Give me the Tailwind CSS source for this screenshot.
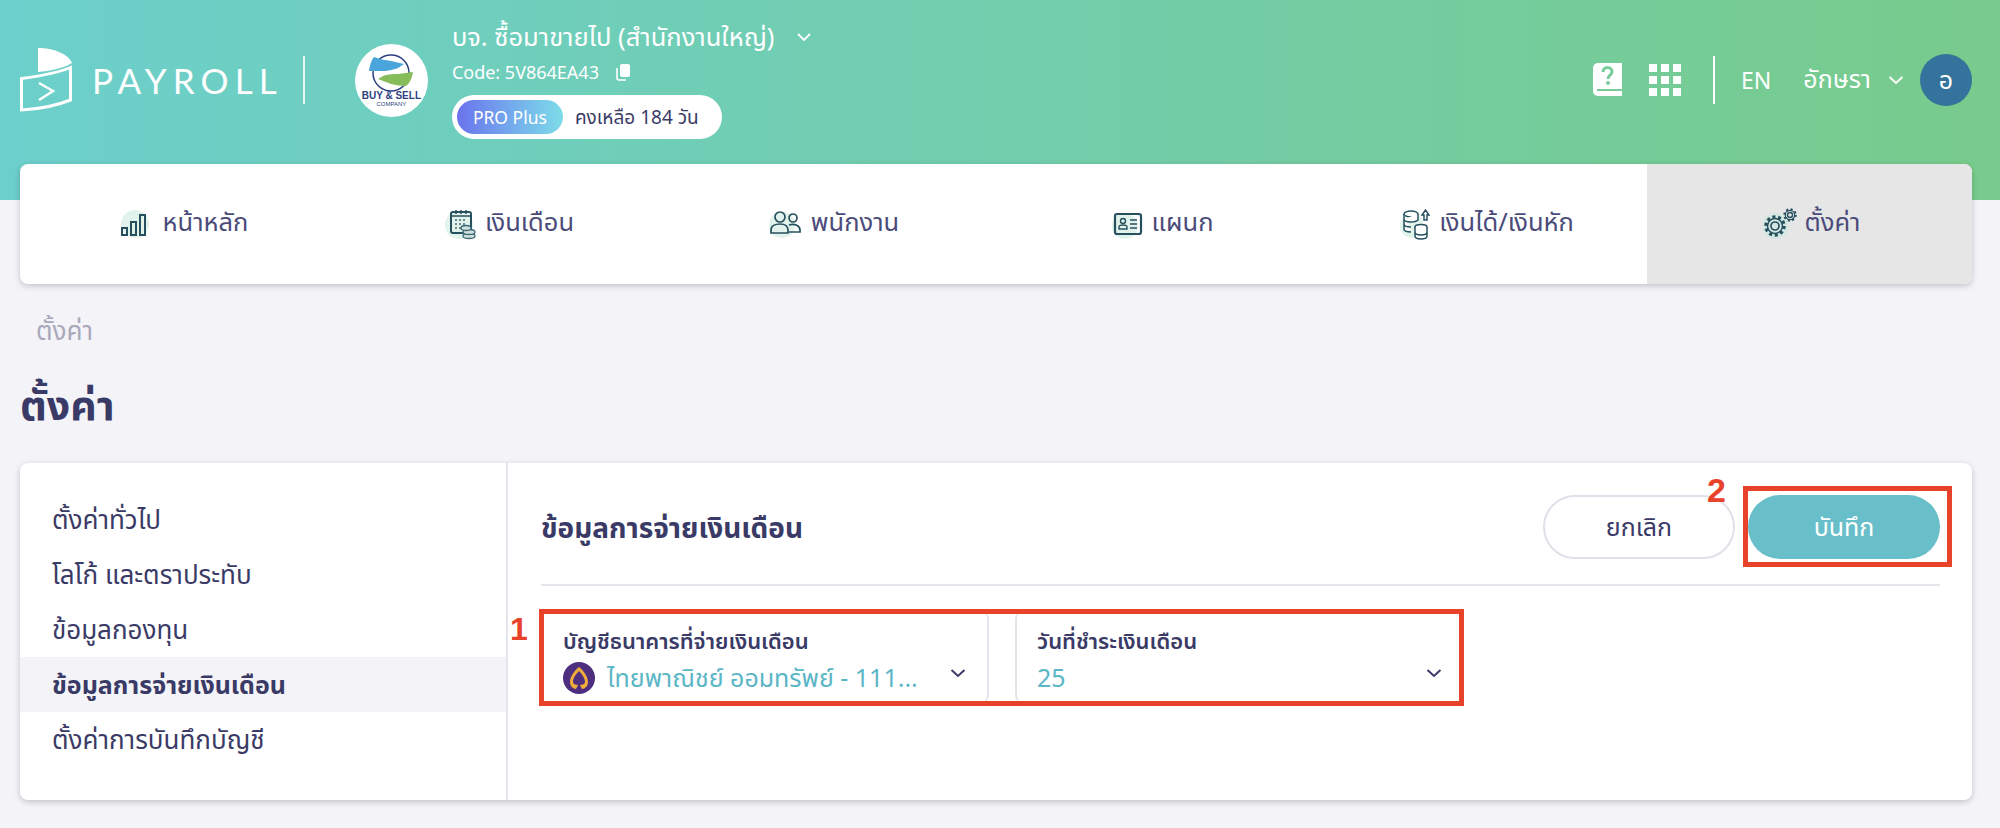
<!DOCTYPE html>
<html lang="th">
<head>
    <meta charset="UTF-8">
    <title>Payroll - ตั้งค่า</title>
    <script src="https://cdn.jsdelivr.net/npm/@tailwindcss/browser@4"></script>
</head>
<body class="relative h-[828px] w-[2000px] overflow-hidden bg-[#f3f3f8] font-['Noto_Sans','Noto_Sans_Thai','Open_Sans','DejaVu_Sans',sans-serif] text-[#3a3a66]">

    <!-- top bar -->
    <header class="flex h-[200px] items-start bg-gradient-to-r from-[#6ccfcb] to-[#78cb8c] pl-[20px] pr-[28px] text-white">
        <div class="mt-[48px] flex items-center">
            <svg class="h-[64px] w-[52px]" viewBox="0 0 52 64" fill="none">
                <path d="M18 0C34 0 48 6 52 15C44 20 30 23 18 24Z" fill="#fff"/>
                <path d="M1.500 30.500C20 28 38 25 50.500 19.500V52C38 57 20 61 1.500 62Z" stroke="#fff" stroke-width="3"/>
                <path d="M19 35L33 43L19 52" stroke="#fff" stroke-width="2.500"/>
            </svg>
            <span class="ml-[20px] font-['Lato'] text-[35px] font-normal leading-none tracking-[0.175em]">PAYROLL</span>
            <div class="ml-[20px] h-[48px] w-[2px] bg-white/80"></div>
        </div>
        <div class="mt-[44px] ml-[50px] flex h-[73px] w-[73px] flex-col items-center rounded-full bg-white pt-[10px]">
            <svg class="h-[38px] w-[44px]" viewBox="0 0 44 38" fill="none">
                <circle cx="22" cy="19" r="18" stroke="#2e3f80" stroke-width="1.500"/>
                <path d="M0 17C1 10 3 5 5 3C10 5 16 6 22 7L35 10L29 14C24 16 18 17 15 17Z" fill="#4aa5dc"/>
                <path d="M44 18C43 25 40 30 37 32C32 32 27 31 22 30L9 25L14 22C20 20 26 20 29 20Z" fill="#86bd5a"/>
            </svg>
            <span class="mt-[-1px] font-['Liberation_Sans'] text-[10px] font-bold leading-[10px] text-[#2e3f80]">BUY &amp; SELL</span>
            <span class="font-['Liberation_Sans'] text-[6px] leading-[7px] text-[#2e3f80]">COMPANY</span>
        </div>
        <div class="ml-[24px] mt-[19px]">
            <div class="flex h-[36px] items-center text-[25.500px] leading-none">
                บจ. ซื้อมาขายไป (สำนักงานใหญ่)
                <svg class="ml-[21px] h-[18px] w-[18px]" viewBox="0 0 18 18" fill="none"><path d="M3 6L9 12L15 6" stroke="#fff" stroke-width="1.800"/></svg>
            </div>
            <div class="mt-[5px] flex h-[24px] items-center text-[18px]">
                Code: 5V864EA43
                <svg class="ml-[15px] h-[18px] w-[18px]" viewBox="0 0 18 18" fill="#fff">
                    <rect x="6" y="1" width="10" height="13" rx="2"/>
                    <path d="M3 5V15A2 2 0 0 0 5 17H12" fill="none" stroke="#fff" stroke-width="1.600"/>
                </svg>
            </div>
            <div class="mt-[11px] flex h-[44px] w-[270px] items-center rounded-full bg-white p-[5px]">
                <span class="flex h-[34px] w-[106px] items-center justify-center rounded-full bg-gradient-to-r from-[#6b72ec] to-[#7ddce8] text-[17.500px]">PRO Plus</span>
                <span class="ml-[12px] text-[19px] text-[#3a3a66]">คงเหลือ 184 วัน</span>
            </div>
        </div>
        <div class="ml-auto mt-[54px] flex items-center">
            <svg class="h-[34px] w-[29px]" viewBox="0 0 29 34">
                <path d="M5 0H29V33H5A5 5 0 0 1 0 28V5A5 5 0 0 1 5 0Z" fill="#fff"/>
                <rect x="4" y="26" width="25" height="2" fill="#78cb9a"/>
                <path d="M10 9C10 3 19 3 19 9C19 12 15 12 15 16" fill="none" stroke="#78cb9a" stroke-width="3"/>
                <rect x="13" y="18" width="4" height="4" rx="2" fill="#78cb9a"/>
            </svg>
            <div class="ml-[27px] grid grid-cols-3 gap-[4px]">
                <i class="h-[8px] w-[8px] bg-white"></i><i class="h-[8px] w-[8px] bg-white"></i><i class="h-[8px] w-[8px] bg-white"></i>
                <i class="h-[8px] w-[8px] bg-white"></i><i class="h-[8px] w-[8px] bg-white"></i><i class="h-[8px] w-[8px] bg-white"></i>
                <i class="h-[8px] w-[8px] bg-white"></i><i class="h-[8px] w-[8px] bg-white"></i><i class="h-[8px] w-[8px] bg-white"></i>
            </div>
            <div class="ml-[32px] h-[48px] w-[2px] bg-white"></div>
            <span class="ml-[26px] text-[23px]">EN</span>
            <span class="mb-[2px] ml-[32px] text-[25px]">อักษรา</span>
            <svg class="ml-[16px] h-[18px] w-[18px]" viewBox="0 0 18 18" fill="none"><path d="M2.500 6L9 12L15.500 6" stroke="#fff" stroke-width="1.800"/></svg>
            <div class="ml-[15px] flex h-[52px] w-[52px] items-center justify-center rounded-full bg-[#34739b] text-[25px]">อ</div>
        </div>
    </header>

    <!-- main menu -->
    <nav class="relative mx-[20px] -mt-[36px] flex h-[120px] w-[1952px] overflow-hidden rounded-[8px] bg-white text-[25.500px] text-[#4b4b7a] shadow-[0_2px_6px_rgba(0,0,0,0.2)]">
        <a class="flex w-[325px] items-center justify-center gap-[12px] pl-[2px]">
            <svg class="h-[32px] w-[32px]" viewBox="0 0 32 32" fill="none">
                <circle cx="16" cy="16" r="14" fill="#e2f3ec"/>
                <g stroke="#27505f" stroke-width="2"><rect x="3" y="20" width="5" height="7"/><rect x="12" y="14" width="5" height="13"/><rect x="21" y="7" width="5" height="20"/></g>
            </svg>
            <span class="mb-[6px]">หน้าหลัก</span>
        </a>
        <a class="flex w-[325px] items-center justify-center gap-[8px] pl-[4px]">
            <svg class="h-[32px] w-[32px]" viewBox="0 0 32 32" fill="none">
                <circle cx="14" cy="17" r="14" fill="#e2f3ec"/>
                <rect x="6" y="4" width="20" height="21" rx="2" stroke="#27505f" stroke-width="2"/>
                <path d="M11 2V6M16 2V6M21 2V6M6 8H26" stroke="#27505f" stroke-width="1.500"/>
                <path d="M10 12H22M10 16H22M10 20H18" stroke="#6b8a94" stroke-width="2" stroke-dasharray="2 2"/>
                <g fill="#cfe0dd" stroke="#3f6a76" stroke-width="1.300"><ellipse cx="24" cy="28" rx="6" ry="2.500"/><ellipse cx="24" cy="24" rx="6" ry="2.500"/><ellipse cx="21" cy="20" rx="5" ry="2.500"/></g>
            </svg>
            <span class="mb-[6px]">เงินเดือน</span>
        </a>
        <a class="flex w-[325px] items-center justify-center gap-[10px] pl-[3px]">
            <svg class="h-[32px] w-[32px]" viewBox="0 0 32 32" fill="none">
                <circle cx="13" cy="17" r="13" fill="#e2f3ec"/>
                <g stroke="#27505f" stroke-width="1.700">
                    <circle cx="11" cy="9" r="5"/><path d="M2 25V22C2 18 6 16 11 16C16 16 19 18 19 22V25Z"/>
                    <circle cx="24" cy="10" r="4"/><path d="M20 17C26 15 31 18 31 22V24H20"/>
                </g>
            </svg>
            <span class="mb-[6px]">พนักงาน</span>
        </a>
        <a class="flex w-[325px] items-center justify-center gap-[8px] pl-[10px]">
            <svg class="h-[32px] w-[32px]" viewBox="0 0 32 32" fill="none">
                <circle cx="13" cy="18" r="13" fill="#e2f3ec"/>
                <rect x="3" y="6" width="26" height="20" rx="2" stroke="#27505f" stroke-width="2.200"/>
                <circle cx="11" cy="13" r="2.500" stroke="#27505f" stroke-width="1.400"/>
                <path d="M7 21V19C7 17 9 17 11 17C13 17 15 17 15 19V21ZM18 12H25M18 16H25M18 20H25" stroke="#27505f" stroke-width="1.400"/>
            </svg>
            <span class="mb-[6px]">แผนก</span>
        </a>
        <a class="flex w-[327px] items-center justify-center gap-[8px] pl-[6px]">
            <svg class="h-[32px] w-[32px]" viewBox="0 0 32 32" fill="none">
                <circle cx="13" cy="18" r="12" fill="#e2f3ec"/>
                <g stroke="#27505f" stroke-width="1.500" fill="#fff">
                    <ellipse cx="12" cy="6" rx="7" ry="3"/>
                    <path d="M5 6V21C5 23 8 24 12 24M5 11C5 13 8 14 12 14C14 14 17 14 19 12V6M5 16C5 18 8 19 12 19"/>
                    <ellipse cx="22" cy="19" rx="6" ry="2.500"/>
                    <path d="M16 19V28C16 30 19 31 22 31C25 31 28 30 28 28V19M16 24C16 26 19 27 22 27C25 27 28 26 28 24"/>
                    <path d="M25 12V7H23L26.500 2L30 7H28V12Z"/>
                </g>
            </svg>
            <span class="mb-[6px]">เงินได้/เงินหัก</span>
        </a>
        <a class="flex w-[325px] items-center justify-center gap-[8px] bg-[#e6e6e6] pl-[4px]">
            <svg class="h-[32px] w-[34px]" viewBox="0 0 34 32" fill="none">
                <circle cx="12" cy="18" r="13" fill="#d3e8e3"/>
                <g stroke="#27505f">
                    <circle cx="12" cy="18" r="4" stroke-width="1.700"/>
                    <circle cx="12" cy="18" r="9" stroke-width="3.500" stroke-dasharray="3 2.650"/>
                    <circle cx="12" cy="18" r="7.500" stroke-width="1.500"/>
                    <circle cx="27" cy="7" r="2.500" stroke-width="1.400"/>
                    <circle cx="27" cy="7" r="5.500" stroke-width="2.500" stroke-dasharray="2 2.300"/>
                    <circle cx="27" cy="7" r="4.700" stroke-width="1.200"/>
                </g>
            </svg>
            <span class="mb-[6px]">ตั้งค่า</span>
        </a>
    </nav>

    <!-- page title -->
    <div class="px-[20px]">
        <div class="mt-[30px] pl-[16px] text-[26px] leading-[32px] text-[#a9a9bb]">ตั้งค่า</div>
        <h1 class="mt-[32px] text-[41px] font-bold leading-[52px] text-[#3a3a66]">ตั้งค่า</h1>

        <!-- settings card -->
        <section class="mt-[33px] flex h-[337px] w-[1952px] rounded-[8px] bg-white shadow-[0_2px_6px_rgba(0,0,0,0.2)]">
            <aside class="w-[488px] border-r-2 border-[#e4e4ec] pt-[29px] text-[26px] leading-[55px]">
                <a class="block pl-[32px]">ตั้งค่าทั่วไป</a>
                <a class="block pl-[32px]">โลโก้ และตราประทับ</a>
                <a class="block pl-[32px]">ข้อมูลกองทุน</a>
                <a class="block bg-[#f4f4f8] pl-[32px] text-[25px] font-bold">ข้อมูลการจ่ายเงินเดือน</a>
                <a class="block pl-[32px]">ตั้งค่าการบันทึกบัญชี</a>
            </aside>
            <div class="flex-1 pl-[33px] pr-[32px]">
                <div class="flex h-[123px] items-center justify-between border-b-2 border-[#e4e4ec] pt-[6px]">
                    <h2 class="text-[28px] font-bold">ข้อมูลการจ่ายเงินเดือน</h2>
                    <div class="flex gap-[13px] text-[25px]">
                        <button class="h-[64px] w-[192px] rounded-full border-2 border-[#e0e0ea]">ยกเลิก</button>
                        <button class="h-[64px] w-[192px] rounded-full bg-[#68bfc9] text-white">บันทึก</button>
                    </div>
                </div>
                <div class="mt-[25px] flex h-[92px] w-[912px]">
                    <div class="w-[448px] rounded-r-[8px] border-r-2 border-[#e4e4ec] pl-[22px] pr-[20px] pt-[13px]">
                        <div class="text-[22px] font-semibold leading-[32px]">บัญชีธนาคารที่จ่ายเงินเดือน</div>
                        <div class="flex h-[44px] items-center text-[25px] text-[#5bb6c6]">
                            <svg class="h-[32px] w-[32px] shrink-0" viewBox="0 0 32 32">
                                <circle cx="16" cy="16" r="16" fill="#4e2e7f"/>
                                <path fill-rule="evenodd" d="M16 5C11 9 7 15 7 20C7 24 10 27 13 27L15 23H17L19 27C22 27 25 24 25 20C25 15 21 9 16 5ZM16 9C13 12 10 16 10 20C10 22 12 23 16 23C20 23 22 22 22 20C22 16 19 12 16 9Z" fill="#f0ad3a"/>
                            </svg>
                            <span class="ml-[12px] whitespace-nowrap">ไทยพาณิชย์ ออมทรัพย์ - 111...</span>
                            <svg class="mb-[10px] ml-auto h-[18px] w-[18px] shrink-0" viewBox="0 0 18 18" fill="none"><path d="M2.500 6L9 12L15.500 6" stroke="#3a3a66" stroke-width="2"/></svg>
                        </div>
                    </div>
                    <div class="ml-[26px] flex-1 rounded-l-[8px] border-l-2 border-[#e4e4ec] pl-[20px] pr-[10px] pt-[13px]">
                        <div class="text-[22px] font-semibold leading-[32px]">วันที่ชำระเงินเดือน</div>
                        <div class="flex h-[44px] items-center text-[25px] text-[#5bb6c6]">
                            25
                            <svg class="mb-[10px] ml-auto h-[18px] w-[18px]" viewBox="0 0 18 18" fill="none"><path d="M2.500 6L9 12L15.500 6" stroke="#3a3a66" stroke-width="2"/></svg>
                        </div>
                    </div>
                </div>
            </div>
        </section>
    </div>

    <!-- annotation marks over the screenshot -->
    <div class="absolute left-[539px] top-[609px] h-[97px] w-[925px] border-[5px] border-[#e8432a]"></div>
    <div class="absolute left-[1743px] top-[486px] h-[81px] w-[209px] border-[5px] border-[#e8432a]"></div>
    <span class="absolute left-[510px] top-[609px] font-['Liberation_Sans'] text-[32px] font-bold leading-[40px] text-[#e8432a]">1</span>
    <span class="absolute left-[1707px] top-[470px] font-['Liberation_Sans'] text-[34px] font-bold leading-[40px] text-[#e8432a]">2</span>
</body>
</html>
